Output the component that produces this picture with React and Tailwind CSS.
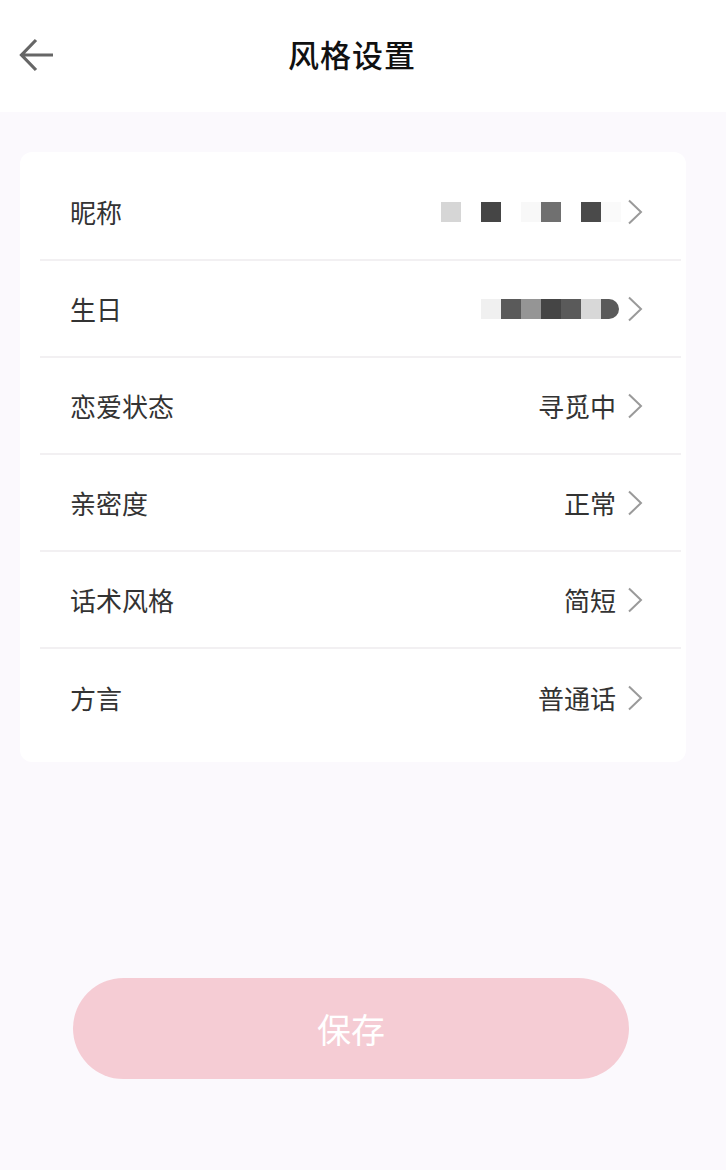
import React from 'react';

const rows = [
  { label: '昵称', type: 'nick' },
  { label: '生日', type: 'birth' },
  { label: '恋爱状态', value: '寻觅中' },
  { label: '亲密度', value: '正常' },
  { label: '话术风格', value: '简短' },
  { label: '方言', value: '普通话' },
];

function Chevron() {
  return (
    <svg width="16" height="26" viewBox="0 0 16 26" className="shrink-0">
      <path d="M2 1.5 L14 13 L2 24.5" fill="none" stroke="#9a9a9a" strokeWidth="2" />
    </svg>
  );
}

function Mosaic({ type }) {
  if (type === 'nick') {
    return (
      <div className="flex h-5 -mr-[5px]">
        <div className="w-5 bg-[#d6d6d6]" />
        <div className="w-5" />
        <div className="w-5 bg-[#454545]" />
        <div className="w-5" />
        <div className="w-5 bg-[#f8f8f8]" />
        <div className="w-5 bg-[#707070]" />
        <div className="w-5" />
        <div className="w-5 bg-[#4a4a4a]" />
        <div className="w-5 bg-[#fafafa]" />
      </div>
    );
  }
  return (
    <div className="flex h-5 -mr-[3px]">
      <div className="w-5 bg-[#f0f0f0]" />
      <div className="w-5 bg-[#5a5a5a]" />
      <div className="w-5 bg-[#959595]" />
      <div className="w-5 bg-[#454545]" />
      <div className="w-5 bg-[#5a5a5a]" />
      <div className="w-5 bg-[#d8d8d8]" />
      <div className="w-[18px] bg-[#5a5a5a] rounded-r-full" />
    </div>
  );
}

export default function App() {
  return (
    <div
      className="min-h-[1170px] bg-[#fbf9fd] flex flex-col"
      style={{ fontFamily: '"Noto Sans CJK SC", "Noto Sans", sans-serif' }}
    >
      <header className="h-[112px] bg-white flex items-center relative">
        <svg width="36" height="34" viewBox="0 0 36 34" className="absolute left-[19px] top-[38px]">
          <path d="M34 17 H3 M17 2 L2.5 17 L17 32" fill="none" stroke="#666" strokeWidth="3.2" />
        </svg>
        <h1 className="flex-1 text-center text-[31px] font-medium text-[#111] tracking-[1px] pr-[22px] -mt-[4px]">风格设置</h1>
      </header>

      <div className="ml-5 mr-10 mt-10 bg-white rounded-[12px] pt-3 pb-4 pl-5 pr-[5px]">
        {rows.map((r, i) => (
          <div
            key={r.label}
            className={`h-[97px] flex items-center pl-[30px] pr-[38px] ${i < rows.length - 1 ? 'border-b-2 border-[#f2f0f2]' : ''}`}
          >
            <span className="text-[26px] text-[#333] flex-1">{r.label}</span>
            <div className="flex items-center gap-[11px]">
              {r.value ? (
                <span className="text-[26px] text-[#333]">{r.value}</span>
              ) : (
                <Mosaic type={r.type} />
              )}
              <Chevron />
            </div>
          </div>
        ))}
      </div>

      <div className="mt-[216px] flex pl-[73px]">
        <button className="w-[556px] h-[101px] rounded-full bg-[#f5ccd4] text-white text-[34px]">
          保存
        </button>
      </div>
    </div>
  );
}
